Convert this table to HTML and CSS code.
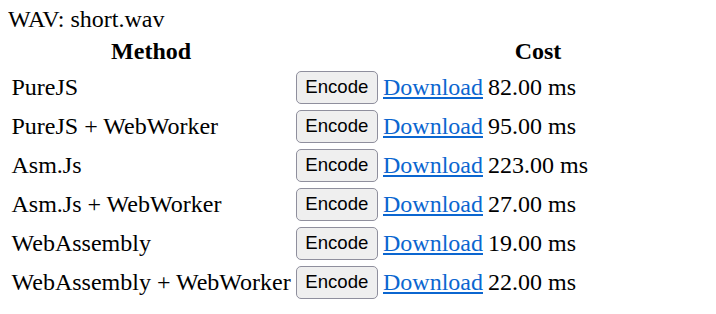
FILE: index.html
```html
<!DOCTYPE html>
<html>
<head>
<meta charset="utf-8">
<link rel="stylesheet" href="styles.css">
</head>
<body>
<div class="title">WAV: short.wav</div>
<table class="bench">
  <thead>
    <tr><th>Method</th><th></th><th></th><th>Cost</th></tr>
  </thead>
  <tbody>
    <tr><td>PureJS</td><td><button class="btn">Encode</button></td><td><a class="dl" href="#">Download</a></td><td>82.00 ms</td></tr>
    <tr><td>PureJS + WebWorker</td><td><button class="btn">Encode</button></td><td><a class="dl" href="#">Download</a></td><td>95.00 ms</td></tr>
    <tr><td>Asm.Js</td><td><button class="btn">Encode</button></td><td><a class="dl" href="#">Download</a></td><td>223.00 ms</td></tr>
    <tr><td>Asm.Js + WebWorker</td><td><button class="btn">Encode</button></td><td><a class="dl" href="#">Download</a></td><td>27.00 ms</td></tr>
    <tr><td>WebAssembly</td><td><button class="btn">Encode</button></td><td><a class="dl" href="#">Download</a></td><td>19.00 ms</td></tr>
    <tr><td>WebAssembly + WebWorker</td><td><button class="btn">Encode</button></td><td><a class="dl" href="#">Download</a></td><td>22.00 ms</td></tr>
  </tbody>
</table>
</body>
</html>
```

FILE: styles.css
```css
html, body {
  background: #ffffff;
}
body {
  margin: 6px 8px 8px;
  font-family: "Liberation Serif", "Times New Roman", serif;
  font-size: 24px;
  color: #000000;
}
.title {
  line-height: 1.15;
}
.bench {
  border-collapse: separate;
  border-spacing: 2.5px 3px;
}
.bench th, .bench td {
  padding: 1.5px;
}
.bench th {
  font-weight: bold;
  text-align: center;
}
.bench td {
  text-align: left;
  white-space: nowrap;
}
.btn {
  font-family: "Liberation Sans", Arial, sans-serif;
  font-size: 18.6px;
  color: #000000;
  background: #efefef;
  border: 1.4px solid #8f8f9d;
  border-radius: 5px;
  padding: 4px 8.6px 5px;
  margin: 0;
  line-height: normal;
}
.dl {
  color: #0b66d0;
  text-decoration: underline;
}
```
